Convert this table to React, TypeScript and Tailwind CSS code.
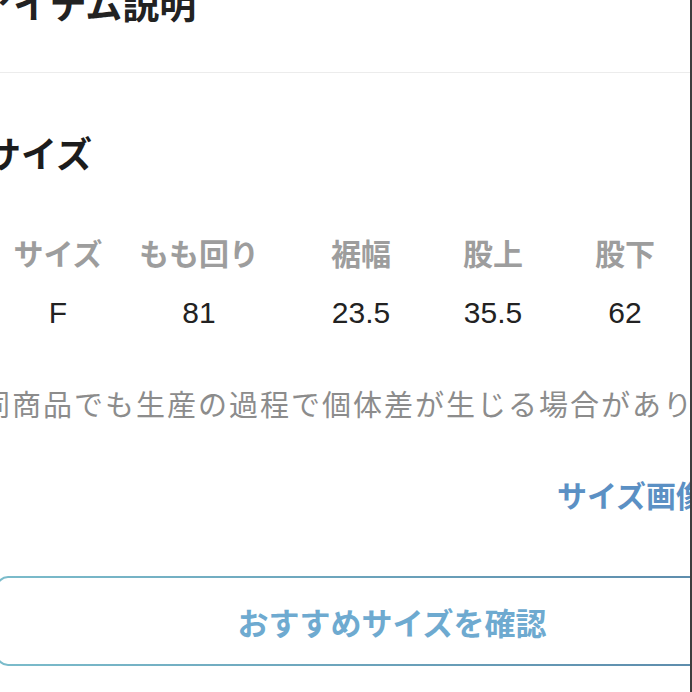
import React from 'react';

const jp = { fontFamily: '"Noto Sans CJK JP", sans-serif' };
const num = { fontFamily: '"Liberation Sans", "Noto Sans CJK JP", sans-serif' };

const columns = [
    { label: 'サイズ', value: 'F' },
    { label: 'もも回り', value: '81' },
    { label: '裾幅', value: '23.5' },
    { label: '股上', value: '35.5' },
    { label: '股下', value: '62' },
];

const App: React.FC = () => {
    return (
        <div className="w-[692px] h-[692px] overflow-hidden flex bg-white">
            <div className="w-[690px] h-full overflow-hidden">
                <div className="ml-[-24px] w-[840px]" style={jp}>
                    {/* Item description */}
                    <h2 className="mt-[-15px] pl-[2px] text-[37px] leading-none font-bold text-[#222]">アイテム説明</h2>
                    <div className="mt-[50px] h-px bg-[#ececec]"></div>

                    {/* Size */}
                    <h3 className="mt-[61px] pl-[9px] text-[36px] leading-none font-bold text-[#1c1c1c]">サイズ</h3>

                    <div className="mt-[67px] pl-[12px]">
                        <div className="grid grid-cols-[140px_142px_182px_82px_182px]">
                            {columns.map((c) => (
                                <div key={c.label} className="text-center text-[30px] leading-none font-bold text-[#9d9d9d] whitespace-nowrap">
                                    {c.label}
                                </div>
                            ))}
                        </div>
                        <div className="mt-[31px] grid grid-cols-[140px_142px_182px_82px_182px]" style={num}>
                            {columns.map((c) => (
                                <div key={c.label} className="text-center text-[30px] leading-none text-[#222] whitespace-nowrap">
                                    {c.value}
                                </div>
                            ))}
                        </div>
                    </div>

                    <p className="mt-[61px] pl-[5px] text-[29px] leading-none tracking-[2px] text-[#8c8c8c] whitespace-nowrap">
                        同商品でも生産の過程で個体差が生じる場合があります。
                    </p>

                    <div className="mt-[61px] pl-[581px] text-[30px] leading-none font-bold text-[#5b90c4] whitespace-nowrap">
                        サイズ画像を見る
                    </div>

                    {/* Recommend button */}
                    <div className="mt-[67px] ml-[20px] w-[792px] p-[2px] rounded-[12px] bg-gradient-to-r from-[#7bbccb] to-[#5a87a9]">
                        <div className="h-[86px] rounded-[10px] bg-white flex items-center justify-center">
                            <span className="text-[31px] leading-none font-bold text-[#6eaad0]">おすすめサイズを確認</span>
                        </div>
                    </div>
                </div>
            </div>
            <div className="w-[2px] h-full bg-[#3d3d3d]"></div>
        </div>
    );
};

export default App;
